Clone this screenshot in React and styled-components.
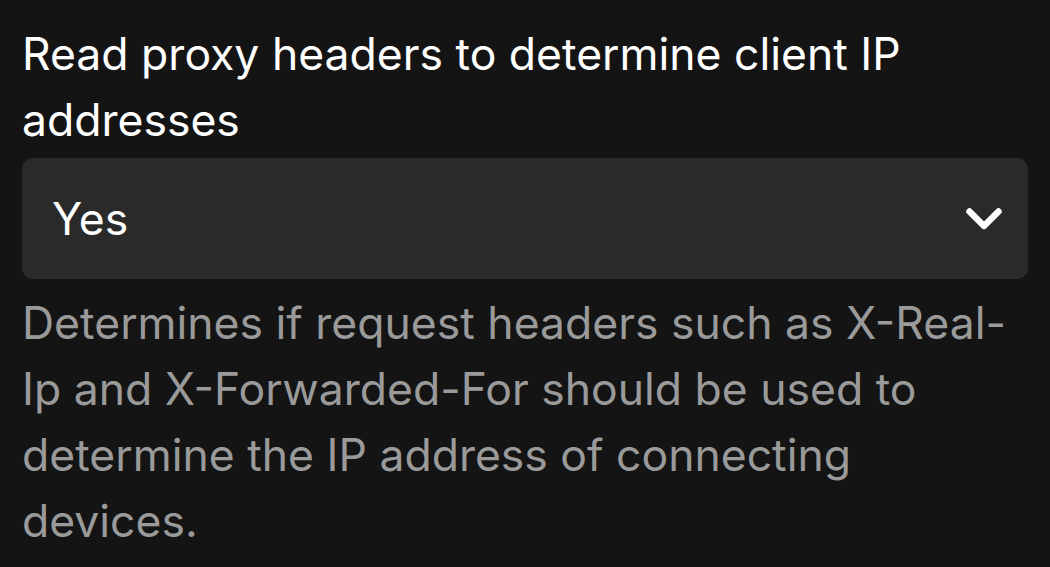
import React from "react";
import styled, { createGlobalStyle } from "styled-components";

const Global = createGlobalStyle`
  html, body { margin: 0; padding: 0; background: #141414; }
  body { font-family: Inter, "Noto Sans", sans-serif; -webkit-font-smoothing: antialiased; }
`;

const Field = styled.div`
  display: flex;
  flex-direction: column;
  padding: 21px 22px 0 22px;
`;

const Label = styled.label`
  color: #ffffff;
  font-size: 44.5px;
  line-height: 66px;
  font-weight: 400;
`;

const SelectBox = styled.div`
  margin-top: 5px;
  height: 121px;
  box-sizing: border-box;
  background: #2a2a2a;
  border-radius: 11px;
  display: flex;
  align-items: center;
  justify-content: space-between;
  padding: 0 26px 0 30px;
  color: #ffffff;
  font-size: 44.5px;
`;

const Value = styled.span`
  line-height: 66px;
`;

const Help = styled.p`
  margin: 11px 0 0 0;
  color: #9a9a9a;
  font-size: 44.5px;
  line-height: 66px;
`;

const Chevron = () => (
  <svg width="36" height="22" viewBox="0 0 36 22" fill="none">
    <path d="M3.5 3.5 L18 18 L32.5 3.5" stroke="#ffffff" strokeWidth="6.5" strokeLinecap="round" strokeLinejoin="round" />
  </svg>
);

export default function App() {
  return (
    <>
      <Global />
      <Field>
        <Label>Read proxy headers to determine client IP addresses</Label>
        <SelectBox>
          <Value>Yes</Value>
          <Chevron />
        </SelectBox>
        <Help>
          Determines if request headers such as X-Real-Ip and X-Forwarded-For should be used to determine the IP address of connecting devices.
        </Help>
      </Field>
    </>
  );
}
